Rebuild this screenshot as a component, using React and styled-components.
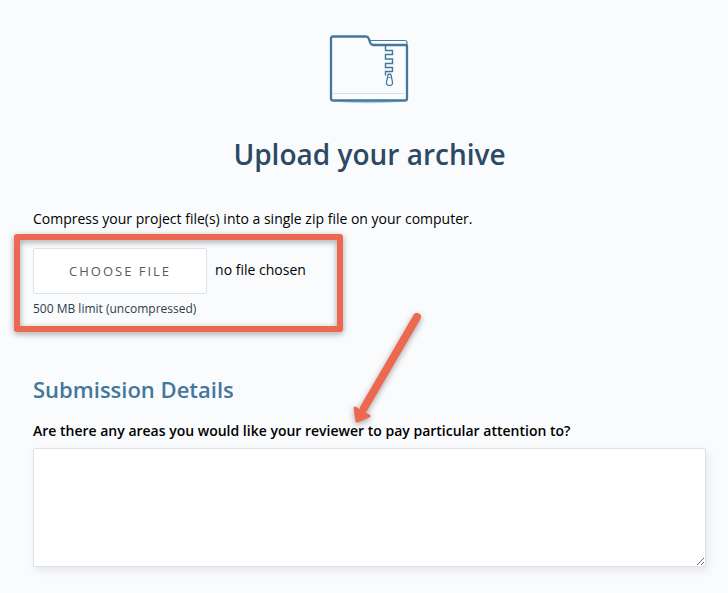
import { useRef, useState } from "react";
import styled, { createGlobalStyle } from "styled-components";

const FolderIcon = () => (
  <StyledFolder viewBox="0 0 82 70" fill="none" aria-hidden="true">
    <path d="M4 67.5Q40 71 76 67.5Z" fill="#a9cbe0" />
    <path
      d="M40 6.5H76Q78 6.5 78 8.5V12H43Z"
      fill="#fff"
      stroke="#4a7fa3"
      strokeWidth="1.2"
    />
    <path
      d="M4 2.5H37Q39 2.500 39.8 4.6L41.2 8.6Q42.2 11 44.5 11H76.5Q78 11 78 12.5V64.5Q78 66.5 76 66.5H4Q2 66.500 2 64.5V4.5Q2 2.5 4 2.5Z"
      fill="#fafbfd"
      stroke="#42789c"
      strokeWidth="2.3"
      strokeLinejoin="round"
    />
    <path d="M4 59.5H75" stroke="#cbe1ed" />
    <path
      d="M56.5 12V16.5H63.5V20.5H56.5V25H63.5V29.5H56.5V33.5H63.5V37.5H56.5V41.5"
      stroke="#42789c"
      strokeWidth="1.4"
    />
    <path
      d="M59 41Q59 40 60.5 40T62 41L63.5 48Q64 51.5 60.5 51.5T57.5 48Z"
      fill="#fff"
      stroke="#42789c"
      strokeWidth="1.3"
    />
    <path d="M59.5 43.5H61.5" stroke="#42789c" />
  </StyledFolder>
);

const App = () => {
  const fileInput = useRef(null);
  const [fileName, setFileName] = useState("no file chosen");

  const handleChange = (e) => {
    const file = e.target.files[0];
    setFileName(file ? file.name : "no file chosen");
  };

  return (
    <>
      <GlobalStyle />
      <Container>
        <FolderIcon />
        <Title>Upload your archive</Title>
        <Text>
          Compress your project file(s) into a single zip file on your computer.
        </Text>
        <UploadArea>
          <FileRow>
            <FileButton type="button" onClick={() => fileInput.current.click()}>
              Choose File
            </FileButton>
            <input
              ref={fileInput}
              type="file"
              accept=".zip"
              aria-label="Archive"
              hidden
              onChange={handleChange}
            />
            <FileName>{fileName}</FileName>
          </FileRow>
          <Hint>500 MB limit (uncompressed)</Hint>
          <Highlight />
        </UploadArea>
        <Details>
          <SubTitle>Submission Details</SubTitle>
          <Label htmlFor="notes">
            Are there any areas you would like your reviewer to pay particular
            attention to?
          </Label>
          <Notes id="notes" />
          <Arrow viewBox="0 0 72 114" aria-hidden="true">
            <path d="M66 6L13 97" stroke="#ed6850" strokeWidth="8" strokeLinecap="round" />
            <path
              d="M4 97L6 110L18 105Z"
              fill="#ed6850"
              stroke="#ed6850"
              strokeWidth="3"
              strokeLinejoin="round"
            />
          </Arrow>
        </Details>
      </Container>
    </>
  );
};

export default App;

const GlobalStyle = createGlobalStyle`
  *,
  *::before,
  *::after {
    box-sizing: border-box;
  }
  body {
    background-color: #fafbfd;
    color: #000;
    font-family: "Open Sans", sans-serif;
    font-size: 14px;
    line-height: 20px;
    margin: 0;
  }
`;

const Container = styled.main`
  display: flex;
  flex-direction: column;
  padding: 34px 22px 24px 33px;
`;

const StyledFolder = styled.svg`
  align-self: center;
  height: 70px;
  width: 82px;
`;

const Title = styled.h1`
  color: #2e4964;
  font-size: 28px;
  font-weight: 600;
  line-height: 40px;
  margin: 30px 0 35px;
  text-align: center;
`;

const Text = styled.p`
  margin: 0;
`;

const UploadArea = styled.section`
  align-self: flex-start;
  margin-top: 19px;
  position: relative;
`;

const FileRow = styled.div`
  align-items: center;
  display: flex;
  gap: 8px;
`;

const FileButton = styled.button`
  background-color: #fff;
  border: 1px solid #dbe2e8;
  border-radius: 2px;
  color: #525c65;
  cursor: pointer;
  font: inherit;
  font-size: 13px;
  height: 46px;
  letter-spacing: 2px;
  padding: 0 35px;
  text-transform: uppercase;
`;

const FileName = styled.span`
  padding-bottom: 2px;
`;

const Hint = styled.p`
  color: #2e3d49;
  font-size: 12px;
  margin: 5px 0 0;
`;

const Highlight = styled.div`
  border: 6px solid #ed6850;
  border-radius: 3px;
  bottom: -13px;
  filter: drop-shadow(0 2px 3px rgba(0, 0, 0, 0.35));
  left: -19px;
  pointer-events: none;
  position: absolute;
  right: -37px;
  top: -14px;
`;

const Details = styled.section`
  display: flex;
  flex-direction: column;
  margin-top: 54px;
  position: relative;
`;

const SubTitle = styled.h2`
  color: #42789c;
  font-size: 22px;
  font-weight: 600;
  line-height: 32px;
  margin: 0;
`;

const Label = styled.label`
  font-weight: 600;
  margin: 16px 0 7px;
`;

const Notes = styled.textarea`
  background-color: #fff;
  border: 1px solid #dbe2e8;
  border-radius: 2px;
  box-shadow: 2px 4px 8px rgba(46, 61, 73, 0.1);
  font: inherit;
  height: 119px;
  padding: 12px;
  resize: both;
  width: 100%;
`;

const Arrow = styled.svg`
  filter: drop-shadow(0 2px 3px rgba(0, 0, 0, 0.35));
  height: 114px;
  left: 318px;
  overflow: visible;
  pointer-events: none;
  position: absolute;
  top: -62px;
  width: 72px;
`;
